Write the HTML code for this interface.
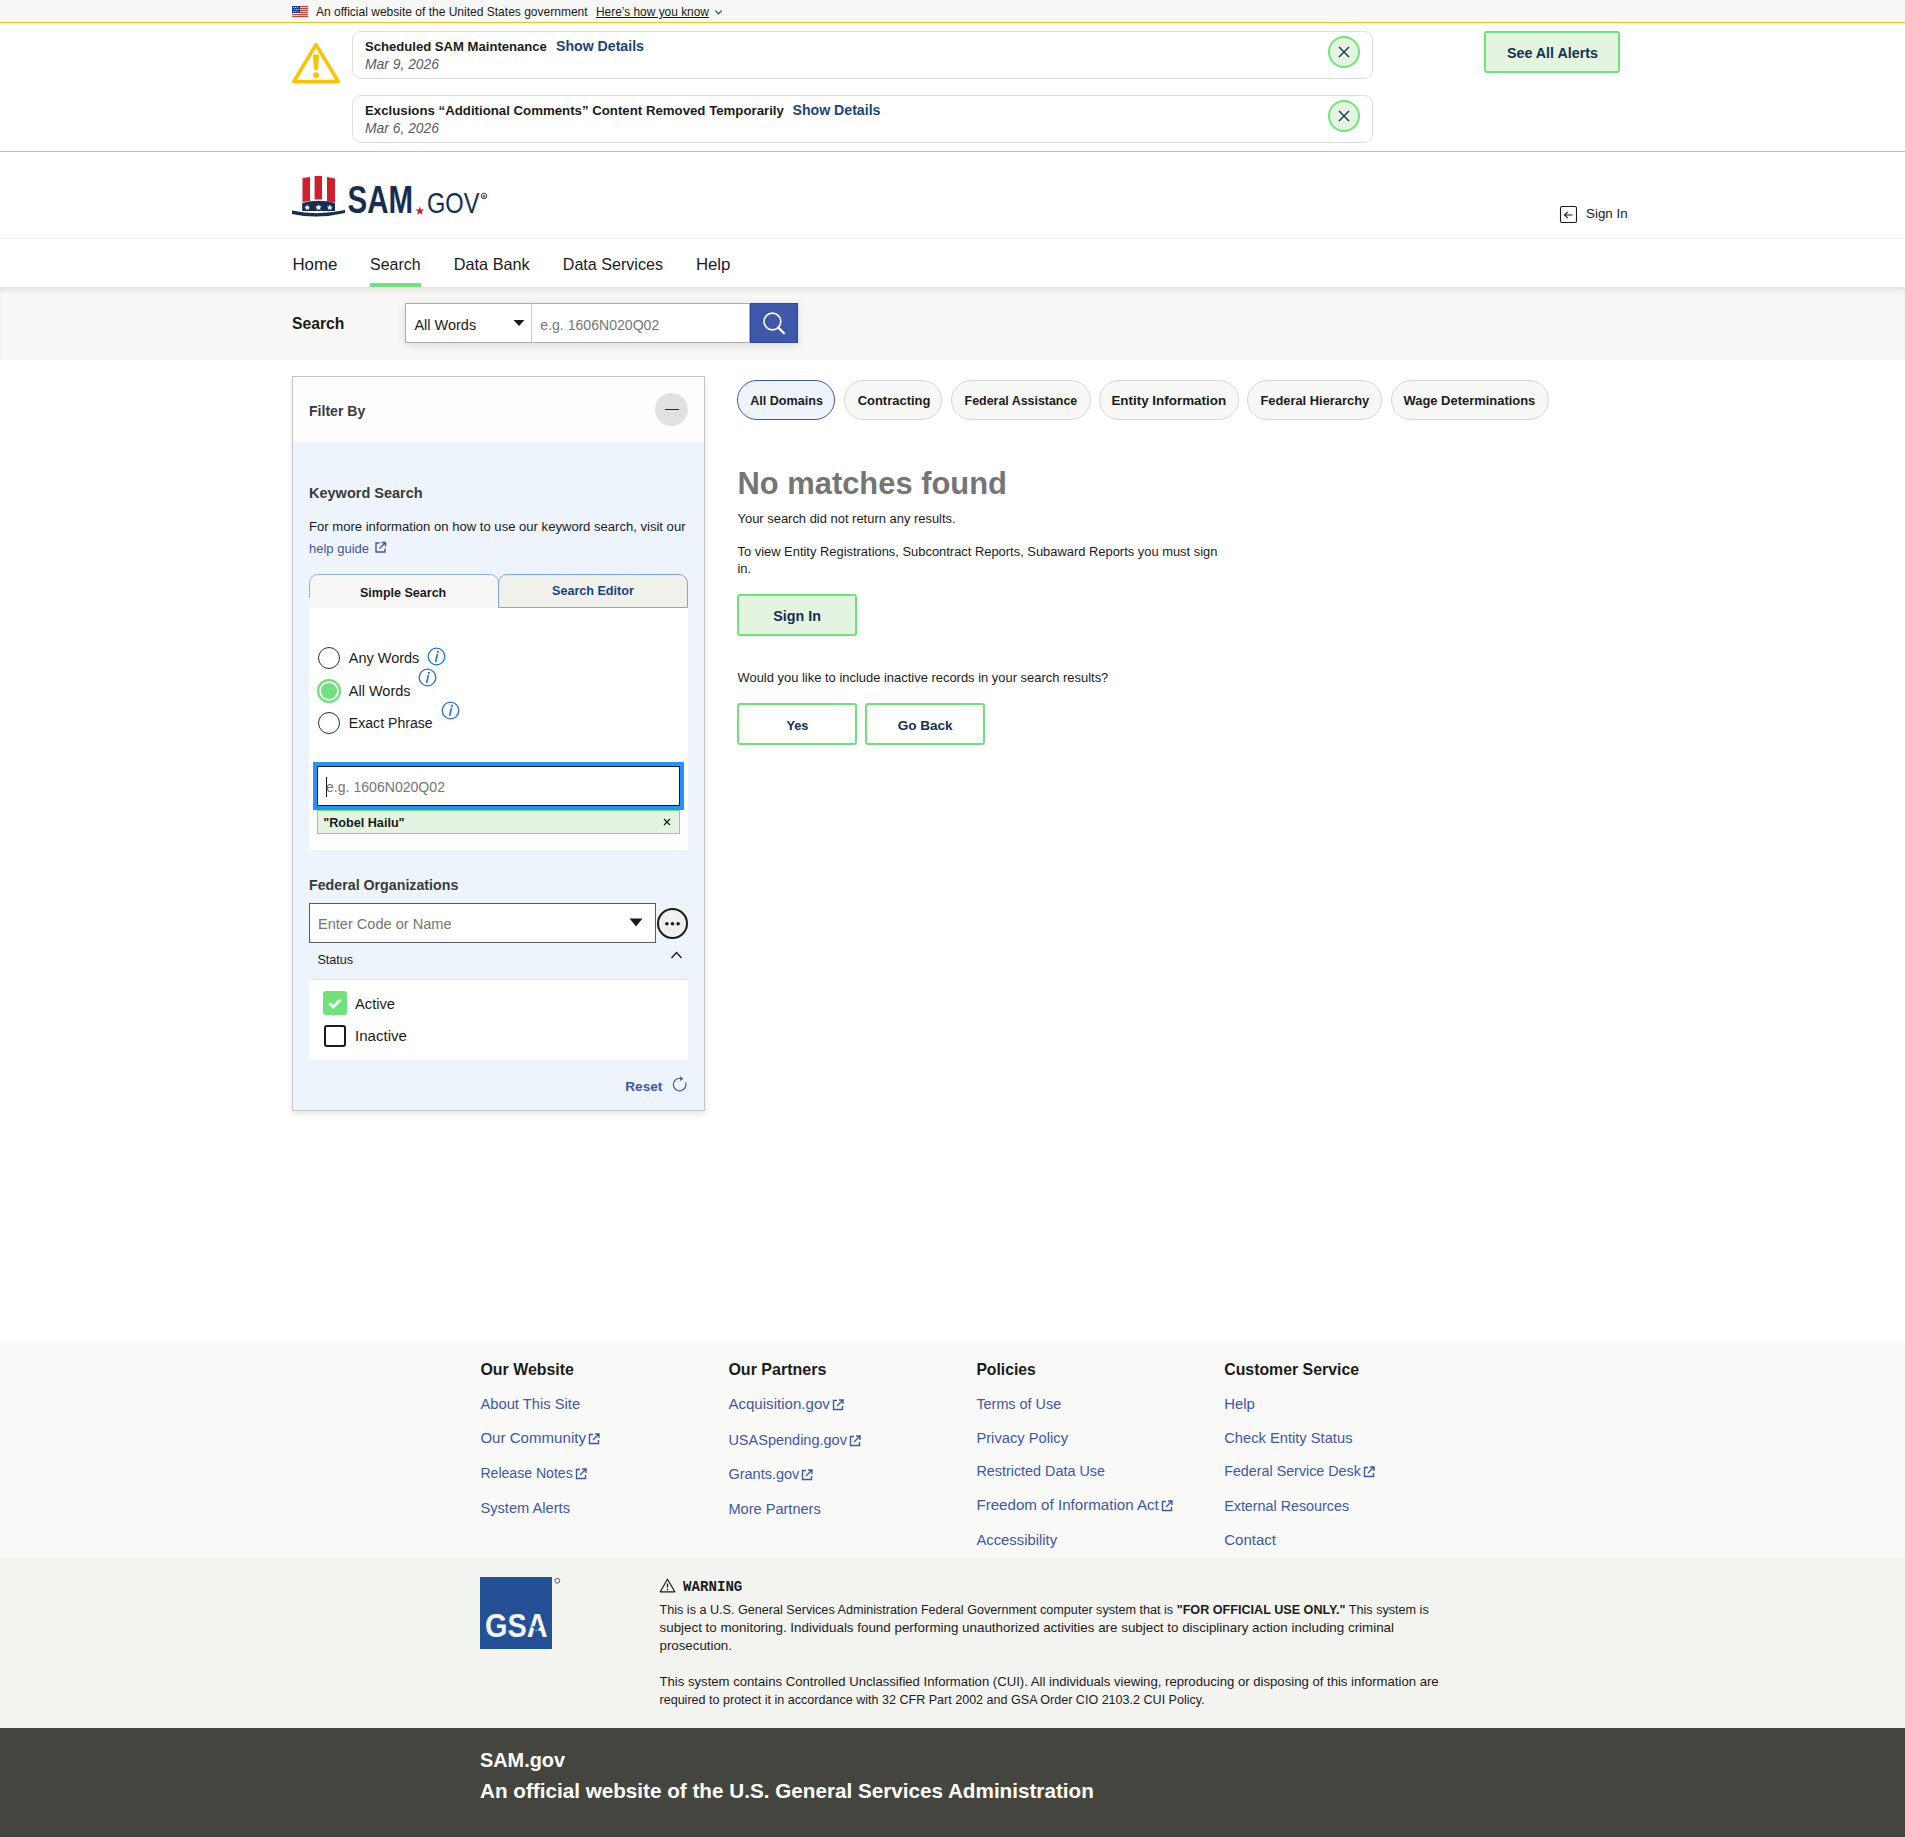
<!DOCTYPE html>
<html><head><meta charset="utf-8"><style>
html,body{margin:0;padding:0;}
body{width:1905px;height:1837px;position:relative;overflow:hidden;background:#fff;font-family:"Liberation Sans",sans-serif;}
.t{position:absolute;white-space:nowrap;line-height:1;}
.r{position:absolute;box-sizing:border-box;}
svg{position:absolute;overflow:visible;}
</style></head><body>
<div class="r" style="left:0px;top:0px;width:1905px;height:22px;background:#f7f7f5"></div>
<div class="r" style="left:0px;top:22px;width:1905px;height:1px;background:#f7c600"></div>
<svg style="left:292px;top:6px" width="16" height="11" viewBox="0 0 16 11">
<rect x="0" y="0" width="16" height="11" fill="#fff"/>
<g fill="#d83933"><rect x="7" y="0" width="9" height="1.2"/><rect x="7" y="2" width="9" height="1.2"/><rect x="7" y="4" width="9" height="1.2"/><rect x="7" y="6" width="9" height="1.2"/><rect x="0" y="8" width="16" height="1.2"/><rect x="0" y="10" width="16" height="1"/></g>
<rect x="0" y="0" width="8" height="7" fill="#0b3bb5"/>
<g fill="#fff"><circle cx="1.5" cy="1.5" r=".6"/><circle cx="3.5" cy="1.5" r=".6"/><circle cx="5.5" cy="1.5" r=".6"/><circle cx="2.5" cy="3.5" r=".6"/><circle cx="4.5" cy="3.5" r=".6"/><circle cx="6.5" cy="3.5" r=".6"/><circle cx="1.5" cy="5.5" r=".6"/><circle cx="3.5" cy="5.5" r=".6"/><circle cx="5.5" cy="5.5" r=".6"/></g>
</svg>
<div class="t" style="left:316.0px;top:6px;font-size:12.03px;font-weight:400;color:#1b1b1b;font-style:normal;font-family:'Liberation Sans';">An official website of the United States government</div>
<div class="t" style="left:596.0px;top:7px;font-size:11.91px;font-weight:400;color:#1b1b1b;font-style:normal;font-family:'Liberation Sans';text-decoration:underline;">Here’s how you know</div>
<svg style="left:714px;top:9px" width="9" height="7" viewBox="0 0 9 7"><path d="M1.3 1.6 L4.5 4.8 L7.7 1.6" fill="none" stroke="#3250b0" stroke-width="1.3"/></svg>
<div class="r" style="left:0px;top:151px;width:1905px;height:1px;background:#f7c600"></div>
<svg style="left:292px;top:42px" width="48" height="42" viewBox="0 0 48 42">
<path d="M24 2.6 L46.2 39.6 L1.8 39.6 Z" fill="none" stroke="#f7c600" stroke-width="3.6" stroke-linejoin="round"/>
<path d="M21.3 13.5 Q24 11.6 26.7 13.5 L25.6 27.8 L22.4 27.8 Z" fill="#f7c600" stroke="#f7c600" stroke-width="0.8" stroke-linejoin="round"/>
<circle cx="24" cy="33.2" r="3" fill="#f7c600"/>
</svg>
<div class="r" style="left:352px;top:31px;width:1021px;height:48px;border:1px solid #dcdee0;border-radius:9px;background:#fff"></div>
<div class="t" style="left:365.0px;top:40px;font-size:13.1px;font-weight:700;color:#1b1b1b;font-style:normal;font-family:'Liberation Sans';">Scheduled SAM Maintenance</div>
<div class="t" style="left:556.0px;top:39px;font-size:14.14px;font-weight:700;color:#1a4480;font-style:normal;font-family:'Liberation Sans';">Show Details</div>
<div class="t" style="left:365.0px;top:58px;font-size:13.87px;font-weight:400;color:#565c65;font-style:italic;font-family:'Liberation Sans';">Mar 9, 2026</div>
<div class="r" style="left:1328px;top:36px;width:32px;height:32px;border:2px solid #70e17b;border-radius:50%;background:#e3f5e1"></div>
<svg style="left:1338px;top:46px" width="12" height="12" viewBox="0 0 12 12"><path d="M1 1 L11 11 M11 1 L1 11" stroke="#1b2b45" stroke-width="1.4"/></svg>
<div class="r" style="left:352px;top:95px;width:1021px;height:48px;border:1px solid #dcdee0;border-radius:9px;background:#fff"></div>
<div class="t" style="left:365.0px;top:104px;font-size:13.24px;font-weight:700;color:#1b1b1b;font-style:normal;font-family:'Liberation Sans';">Exclusions “Additional Comments” Content Removed Temporarily</div>
<div class="t" style="left:792.5px;top:103px;font-size:14.14px;font-weight:700;color:#1a4480;font-style:normal;font-family:'Liberation Sans';">Show Details</div>
<div class="t" style="left:365.0px;top:122px;font-size:13.87px;font-weight:400;color:#565c65;font-style:italic;font-family:'Liberation Sans';">Mar 6, 2026</div>
<div class="r" style="left:1328px;top:100px;width:32px;height:32px;border:2px solid #70e17b;border-radius:50%;background:#e3f5e1"></div>
<svg style="left:1338px;top:110px" width="12" height="12" viewBox="0 0 12 12"><path d="M1 1 L11 11 M11 1 L1 11" stroke="#1b2b45" stroke-width="1.4"/></svg>
<div class="r" style="left:1484px;top:31px;width:136px;height:42px;border:2px solid #70e17b;border-radius:3px;background:#e3f5e1"></div>
<div class="t" style="left:1507.0px;top:46px;font-size:14.28px;font-weight:700;color:#162e51;font-style:normal;font-family:'Liberation Sans';">See All Alerts</div>
<svg style="left:288px;top:170px" width="204" height="52" viewBox="0 0 204 52">
<path d="M14.5 8 L22 7 L22 31 L14.5 32 Z" fill="#d0202e"/>
<path d="M26.6 6 L34 6 L34 29.5 L26.6 29.5 Z" fill="#d0202e"/>
<path d="M39 7 L47 8.5 L47 32.5 L39 31.5 Z" fill="#d0202e"/>
<path d="M14.2 33 Q30.5 28.5 47 33 L47 41 L14.2 41 Z" fill="#162e51"/>
<g fill="#fff">
<path d="M19.3 34.6 l0.9 1.9 2 .2 -1.5 1.3 .5 2 -1.9 -1.1 -1.9 1.1 .5 -2 -1.5 -1.3 2 -.2z"/>
<path d="M30.5 34.2 l1.0 2.1 2.2 .2 -1.7 1.5 .6 2.2 -2.1 -1.2 -2.1 1.2 .6 -2.2 -1.7 -1.5 2.2 -.2z"/>
<path d="M41.8 34.6 l0.9 1.9 2 .2 -1.5 1.3 .5 2 -1.9 -1.1 -1.9 1.1 .5 -2 -1.5 -1.3 2 -.2z"/>
</g>
<path d="M4 40.5 Q30 46 57 40 L57 43 Q30 49.5 4 44 Z" fill="#162e51"/>
<text x="59.5" y="42.8" font-family="Liberation Sans" font-weight="700" font-size="38.5" fill="#162e51" textLength="65.5" lengthAdjust="spacingAndGlyphs">SAM</text>
<path d="M131.80 36.40 L132.94 39.44 L136.17 39.58 L133.64 41.60 L134.50 44.72 L131.80 42.93 L129.10 44.72 L129.96 41.60 L127.43 39.58 L130.66 39.44Z" fill="#d0202e"/>
<text x="139" y="43.4" font-family="Liberation Sans" font-weight="400" font-size="29.5" fill="#162e51" textLength="52.5" lengthAdjust="spacingAndGlyphs">GOV</text>
<circle cx="196" cy="26" r="2.8" fill="none" stroke="#162e51" stroke-width="0.9"/>
<text x="194.6" y="27.6" font-family="Liberation Sans" font-weight="700" font-size="4.2" fill="#162e51">R</text>
</svg>
<svg style="left:1559px;top:205px" width="19" height="19" viewBox="0 0 19 19">
<rect x="1.5" y="1.5" width="16" height="16" rx="1.5" fill="none" stroke="#1b1b1b" stroke-width="1.1"/>
<path d="M13.5 10 L5.5 10 M8.8 6.8 L5.5 10 L8.8 13.2" fill="none" stroke="#1b1b1b" stroke-width="1.1"/>
</svg>
<div class="t" style="left:1586.0px;top:207px;font-size:13.36px;font-weight:400;color:#1b1b1b;font-style:normal;font-family:'Liberation Sans';">Sign In</div>
<div class="r" style="left:0px;top:238px;width:1905px;height:1px;background:#f0f0ea"></div>
<div class="t" style="left:292.4px;top:257px;font-size:16.87px;font-weight:400;color:#1b1b1b;font-style:normal;font-family:'Liberation Sans';">Home</div>
<div class="t" style="left:370.1px;top:257px;font-size:15.94px;font-weight:400;color:#1b1b1b;font-style:normal;font-family:'Liberation Sans';">Search</div>
<div class="t" style="left:453.8px;top:256px;font-size:16.28px;font-weight:400;color:#1b1b1b;font-style:normal;font-family:'Liberation Sans';">Data Bank</div>
<div class="t" style="left:562.8px;top:256px;font-size:16.1px;font-weight:400;color:#1b1b1b;font-style:normal;font-family:'Liberation Sans';">Data Services</div>
<div class="t" style="left:695.9px;top:257px;font-size:16.77px;font-weight:400;color:#1b1b1b;font-style:normal;font-family:'Liberation Sans';">Help</div>
<div class="r" style="left:370px;top:283px;width:51px;height:4px;background:#70e17b"></div>
<div class="r" style="left:0px;top:287px;width:1905px;height:73px;background:#f7f7f5;box-shadow:inset 0 6px 6px -4px rgba(0,0,0,0.12)"></div>
<div class="t" style="left:292.0px;top:316px;font-size:15.71px;font-weight:700;color:#1b1b1b;font-style:normal;font-family:'Liberation Sans';">Search</div>
<div class="r" style="left:405px;top:303px;width:393px;height:40px;box-shadow:0 2px 8px rgba(0,0,0,0.12)"></div>
<div class="r" style="left:405px;top:303px;width:127px;height:40px;background:#fff;border:1px solid #adadad"></div>
<div class="t" style="left:414.4px;top:318px;font-size:14.51px;font-weight:400;color:#1b1b1b;font-style:normal;font-family:'Liberation Sans';">All Words</div>
<svg style="left:513px;top:319px" width="12" height="8" viewBox="0 0 12 8"><path d="M0.5 1 L11.5 1 L6 7 Z" fill="#1b1b1b"/></svg>
<div class="r" style="left:531px;top:303px;width:219px;height:40px;background:#fff;border:1px solid #adadad;border-left:1px solid #c9c9c9"></div>
<div class="t" style="left:540.3px;top:318px;font-size:14.09px;font-weight:400;color:#757575;font-style:normal;font-family:'Liberation Sans';">e.g. 1606N020Q02</div>
<div class="r" style="left:750px;top:303px;width:48px;height:40px;background:#3f57a8;border:1px solid #2f469e"></div>
<svg style="left:750px;top:303px" width="48" height="40" viewBox="0 0 48 40">
<circle cx="22.4" cy="18.5" r="8.4" fill="none" stroke="#fff" stroke-width="1.6"/>
<path d="M28.3 24.6 L34 30.3" stroke="#fff" stroke-width="2.2" stroke-linecap="round"/>
</svg>
<div class="r" style="left:292px;top:376px;width:413px;height:735px;background:#edf4fc;border:1px solid #c4c4c4;box-shadow:0 3px 6px rgba(0,0,0,0.10)"></div>
<div class="r" style="left:293px;top:377px;width:411px;height:65px;background:#fdfdfd"></div>
<div class="t" style="left:309.0px;top:404px;font-size:14.05px;font-weight:700;color:#3a3a38;font-style:normal;font-family:'Liberation Sans';">Filter By</div>
<div class="r" style="left:655px;top:393px;width:33px;height:33px;background:#dfe1e2;border-radius:50%"></div>
<div class="r" style="left:664.5px;top:408.5px;width:14px;height:1.6px;background:#162e51"></div>
<div class="t" style="left:309.0px;top:486px;font-size:14.51px;font-weight:700;color:#3a3a38;font-style:normal;font-family:'Liberation Sans';">Keyword Search</div>
<div class="t" style="left:309.0px;top:520px;font-size:13.09px;font-weight:400;color:#1b1b1b;font-style:normal;font-family:'Liberation Sans';">For more information on how to use our keyword search, visit our</div>
<div class="t" style="left:309.0px;top:542px;font-size:13.0px;font-weight:400;color:#3f57a6;font-style:normal;font-family:'Liberation Sans';">help guide</div>
<svg style="left:374px;top:541px" width="13" height="13" viewBox="0 0 13 13">
<path d="M5.5 2 L2 2 L2 11 L11 11 L11 7.5" fill="none" stroke="#3f57a6" stroke-width="1.4"/>
<path d="M7.5 1.5 L11.5 1.5 L11.5 5.5 M11.5 1.5 L5.5 7.5" fill="none" stroke="#3f57a6" stroke-width="1.4"/>
</svg>
<div class="r" style="left:309px;top:607px;width:379px;height:243px;background:#fff"></div>
<div class="r" style="left:309px;top:574px;width:190px;height:34px;background:#f7f7f5;border:1px solid #8ab4f8;border-bottom:none;border-radius:9px 9px 0 0"></div>
<div class="r" style="left:309px;top:598px;width:190px;height:10px;background:#f7f7f5;border-left:1px solid #fff"></div>
<div class="r" style="left:498px;top:574px;width:190px;height:34px;background:#f1f1ec;border:1px solid #7aa7f0;border-radius:9px 9px 0 0"></div>
<div class="t" style="left:360.0px;top:587px;font-size:12.52px;font-weight:700;color:#1b1b1b;font-style:normal;font-family:'Liberation Sans';">Simple Search</div>
<div class="t" style="left:552.0px;top:585px;font-size:12.58px;font-weight:700;color:#1a4480;font-style:normal;font-family:'Liberation Sans';">Search Editor</div>
<div class="r" style="left:318px;top:646.7px;width:22px;height:22px;border-radius:50%;background:#fff;border:1.4px solid #2e2e2e"></div>
<div class="t" style="left:348.8px;top:651px;font-size:14.47px;font-weight:400;color:#1b1b1b;font-style:normal;font-family:'Liberation Sans';">Any Words</div>
<svg style="left:426.5px;top:646.5px" width="19" height="19" viewBox="0 0 19 19">
<circle cx="9.5" cy="9.5" r="8.3" fill="none" stroke="#1f6fe0" stroke-width="1.3"/>
<path d="M10.3 7.6 L8.7 14.2" stroke="#1f6fe0" stroke-width="1.6" stroke-linecap="round"/>
<circle cx="10.9" cy="4.9" r="1.05" fill="#1f6fe0"/>
</svg>
<div class="r" style="left:317px;top:678.8px;width:24px;height:24px;border-radius:50%;background:#70e17b;box-shadow:inset 0 0 0 2.2px #70e17b, inset 0 0 0 4px #fff"></div>
<div class="t" style="left:348.8px;top:684px;font-size:14.51px;font-weight:400;color:#1b1b1b;font-style:normal;font-family:'Liberation Sans';">All Words</div>
<svg style="left:418.3px;top:667.9px" width="19" height="19" viewBox="0 0 19 19">
<circle cx="9.5" cy="9.5" r="8.3" fill="none" stroke="#1f6fe0" stroke-width="1.3"/>
<path d="M10.3 7.6 L8.7 14.2" stroke="#1f6fe0" stroke-width="1.6" stroke-linecap="round"/>
<circle cx="10.9" cy="4.9" r="1.05" fill="#1f6fe0"/>
</svg>
<div class="r" style="left:318px;top:712px;width:22px;height:22px;border-radius:50%;background:#fff;border:1.4px solid #2e2e2e"></div>
<div class="t" style="left:348.8px;top:716px;font-size:14.12px;font-weight:400;color:#1b1b1b;font-style:normal;font-family:'Liberation Sans';">Exact Phrase</div>
<svg style="left:440.7px;top:700.5px" width="19" height="19" viewBox="0 0 19 19">
<circle cx="9.5" cy="9.5" r="8.3" fill="none" stroke="#1f6fe0" stroke-width="1.3"/>
<path d="M10.3 7.6 L8.7 14.2" stroke="#1f6fe0" stroke-width="1.6" stroke-linecap="round"/>
<circle cx="10.9" cy="4.9" r="1.05" fill="#1f6fe0"/>
</svg>
<div class="r" style="left:313px;top:762px;width:371px;height:48px;border:4px solid #2491ff;background:#fff"></div>
<div class="r" style="left:317px;top:766px;width:363px;height:40px;border:1px solid #1b1b1b"></div>
<div class="t" style="left:326.0px;top:780px;font-size:14.09px;font-weight:400;color:#757575;font-style:normal;font-family:'Liberation Sans';">e.g. 1606N020Q02</div>
<div class="r" style="left:326px;top:777px;width:1px;height:20px;background:#1b1b1b"></div>
<div class="r" style="left:317px;top:810px;width:363px;height:24px;background:#e3f5e1;border:1px solid #70e17b"></div>
<div class="t" style="left:323.2px;top:817px;font-size:12.64px;font-weight:700;color:#1b1b1b;font-style:normal;font-family:'Liberation Sans';">"Robel Hailu"</div>
<svg style="left:662px;top:817px" width="10" height="10" viewBox="0 0 10 10"><path d="M2 2 L8 8 M8 2 L2 8" stroke="#1b1b1b" stroke-width="1.2"/></svg>
<div class="t" style="left:309.0px;top:878px;font-size:14.23px;font-weight:700;color:#3a3a38;font-style:normal;font-family:'Liberation Sans';">Federal Organizations</div>
<div class="r" style="left:309px;top:903px;width:347px;height:40px;background:#fff;border:1px solid #565c65"></div>
<div class="t" style="left:318.0px;top:917px;font-size:14.57px;font-weight:400;color:#757575;font-style:normal;font-family:'Liberation Sans';">Enter Code or Name</div>
<svg style="left:629px;top:918px" width="14" height="10" viewBox="0 0 14 10"><path d="M0.5 0.5 L13.5 0.5 L7 8.5 Z" fill="#1b1b1b"/></svg>
<div class="r" style="left:657px;top:908px;width:31px;height:31px;border:2px solid #1b1b1b;border-radius:50%;background:#f0f0f0"></div>
<svg style="left:657px;top:908px" width="31" height="31" viewBox="0 0 31 31"><circle cx="9.9" cy="15.8" r="1.8" fill="#1b1b1b"/><circle cx="15.5" cy="15.8" r="1.8" fill="#1b1b1b"/><circle cx="21.1" cy="15.8" r="1.8" fill="#1b1b1b"/></svg>
<div class="t" style="left:317.4px;top:954px;font-size:12.63px;font-weight:400;color:#1b1b1b;font-style:normal;font-family:'Liberation Sans';">Status</div>
<svg style="left:670px;top:950px" width="13" height="10" viewBox="0 0 13 10"><path d="M1.5 8 L6.5 2.5 L11.5 8" fill="none" stroke="#1b1b1b" stroke-width="1.3"/></svg>
<div class="r" style="left:309px;top:979px;width:379px;height:81px;background:#fff;border-top:1px solid #e6e6e6"></div>
<div class="r" style="left:323px;top:991px;width:24px;height:24px;background:#70e17b;border-radius:3px"></div>
<svg style="left:323px;top:991px" width="24" height="24" viewBox="0 0 24 24"><path d="M6.5 12.2 L10.3 16 L17.5 8.8" fill="none" stroke="#fff" stroke-width="2.8"/></svg>
<div class="t" style="left:355.0px;top:997px;font-size:14.69px;font-weight:400;color:#1b1b1b;font-style:normal;font-family:'Liberation Sans';">Active</div>
<div class="r" style="left:324px;top:1025px;width:22px;height:22px;border:2px solid #1b1b1b;border-radius:3px;background:#fff"></div>
<div class="t" style="left:355.0px;top:1028px;font-size:15.09px;font-weight:400;color:#1b1b1b;font-style:normal;font-family:'Liberation Sans';">Inactive</div>
<div class="t" style="left:625.3px;top:1080px;font-size:13.58px;font-weight:700;color:#3f57a6;font-style:normal;font-family:'Liberation Sans';">Reset</div>
<svg style="left:671px;top:1076px" width="17" height="17" viewBox="0 0 17 17">
<path d="M9.2 2.3 A6.3 6.3 0 1 0 14.6 6.45" fill="none" stroke="#3f57a6" stroke-width="1.2"/>
<path d="M9.1 0.2 L12.4 2.7 L9.1 5.0 Z" fill="#3f57a6"/>
</svg>
<div class="r" style="left:737px;top:380px;width:98px;height:40px;border:1px solid #3f57a6;border-radius:20px;background:#eef4fb"></div>
<div class="t" style="left:750.2px;top:395px;font-size:12.6px;font-weight:700;color:#1b1b1b;font-style:normal;font-family:'Liberation Sans';">All Domains</div>
<div class="r" style="left:844px;top:380px;width:98px;height:40px;border:1px solid #d6d7d9;border-radius:20px;background:#f7f7f5"></div>
<div class="t" style="left:857.7px;top:395px;font-size:12.96px;font-weight:700;color:#1b1b1b;font-style:normal;font-family:'Liberation Sans';">Contracting</div>
<div class="r" style="left:951px;top:380px;width:140px;height:40px;border:1px solid #d6d7d9;border-radius:20px;background:#f7f7f5"></div>
<div class="t" style="left:964.6px;top:395px;font-size:12.41px;font-weight:700;color:#1b1b1b;font-style:normal;font-family:'Liberation Sans';">Federal Assistance</div>
<div class="r" style="left:1099px;top:380px;width:140px;height:40px;border:1px solid #d6d7d9;border-radius:20px;background:#f7f7f5"></div>
<div class="t" style="left:1111.4px;top:394px;font-size:13.41px;font-weight:700;color:#1b1b1b;font-style:normal;font-family:'Liberation Sans';">Entity Information</div>
<div class="r" style="left:1247px;top:380px;width:135px;height:40px;border:1px solid #d6d7d9;border-radius:20px;background:#f7f7f5"></div>
<div class="t" style="left:1260.4px;top:395px;font-size:12.88px;font-weight:700;color:#1b1b1b;font-style:normal;font-family:'Liberation Sans';">Federal Hierarchy</div>
<div class="r" style="left:1391px;top:380px;width:158px;height:40px;border:1px solid #d6d7d9;border-radius:20px;background:#f7f7f5"></div>
<div class="t" style="left:1403.5px;top:395px;font-size:12.95px;font-weight:700;color:#1b1b1b;font-style:normal;font-family:'Liberation Sans';">Wage Determinations</div>
<div class="t" style="left:737.5px;top:469px;font-size:30.9px;font-weight:700;color:#757575;font-style:normal;font-family:'Liberation Sans';">No matches found</div>
<div class="t" style="left:737.5px;top:513px;font-size:12.94px;font-weight:400;color:#1b1b1b;font-style:normal;font-family:'Liberation Sans';">Your search did not return any results.</div>
<div class="t" style="left:737.5px;top:546px;font-size:12.91px;font-weight:400;color:#1b1b1b;font-style:normal;font-family:'Liberation Sans';">To view Entity Registrations, Subcontract Reports, Subaward Reports you must sign</div>
<div class="t" style="left:737.5px;top:563px;font-size:12.91px;font-weight:400;color:#1b1b1b;font-style:normal;font-family:'Liberation Sans';">in.</div>
<div class="r" style="left:737px;top:594px;width:120px;height:42px;background:#e3f5e1;border:2px solid #70e17b;border-radius:3px"></div>
<div class="t" style="left:773.3px;top:609px;font-size:14.34px;font-weight:700;color:#162e51;font-style:normal;font-family:'Liberation Sans';">Sign In</div>
<div class="t" style="left:737.5px;top:672px;font-size:12.94px;font-weight:400;color:#1b1b1b;font-style:normal;font-family:'Liberation Sans';">Would you like to include inactive records in your search results?</div>
<div class="r" style="left:737px;top:703px;width:120px;height:42px;background:#fff;border:2px solid #70e17b;border-radius:3px"></div>
<div class="t" style="left:786.4px;top:720px;font-size:12.76px;font-weight:700;color:#162e51;font-style:normal;font-family:'Liberation Sans';">Yes</div>
<div class="r" style="left:865px;top:703px;width:120px;height:42px;background:#fff;border:2px solid #70e17b;border-radius:3px"></div>
<div class="t" style="left:897.7px;top:719px;font-size:13.56px;font-weight:700;color:#162e51;font-style:normal;font-family:'Liberation Sans';">Go Back</div>
<div class="r" style="left:0px;top:1343px;width:1905px;height:214px;background:#f9f9f7"></div>
<div class="t" style="left:480.4px;top:1362px;font-size:15.94px;font-weight:700;color:#1b1b1b;font-style:normal;font-family:'Liberation Sans';">Our Website</div>
<div class="t" style="left:480.4px;top:1397px;font-size:14.76px;font-weight:400;color:#3f57a6;font-style:normal;font-family:'Liberation Sans';">About This Site</div>
<div class="t" style="left:480.4px;top:1430px;font-size:15.08px;font-weight:400;color:#3f57a6;font-style:normal;font-family:'Liberation Sans';">Our Community</div>
<svg style="left:588.0px;top:1433.4px" width="12" height="12" viewBox="0 0 12 12">
<path d="M5 1.5 L1.5 1.5 L1.5 10.5 L10.5 10.5 L10.5 7" fill="none" stroke="#3f57a6" stroke-width="1.4"/>
<path d="M7 1 L11 1 L11 5 M11 1 L5 7" fill="none" stroke="#3f57a6" stroke-width="1.4"/>
</svg>
<div class="t" style="left:480.4px;top:1466px;font-size:14.09px;font-weight:400;color:#3f57a6;font-style:normal;font-family:'Liberation Sans';">Release Notes</div>
<svg style="left:574.8px;top:1468.0px" width="12" height="12" viewBox="0 0 12 12">
<path d="M5 1.5 L1.5 1.5 L1.5 10.5 L10.5 10.5 L10.5 7" fill="none" stroke="#3f57a6" stroke-width="1.4"/>
<path d="M7 1 L11 1 L11 5 M11 1 L5 7" fill="none" stroke="#3f57a6" stroke-width="1.4"/>
</svg>
<div class="t" style="left:480.4px;top:1501px;font-size:14.66px;font-weight:400;color:#3f57a6;font-style:normal;font-family:'Liberation Sans';">System Alerts</div>
<div class="t" style="left:728.4px;top:1361px;font-size:16.05px;font-weight:700;color:#1b1b1b;font-style:normal;font-family:'Liberation Sans';">Our Partners</div>
<div class="t" style="left:728.4px;top:1396px;font-size:15.09px;font-weight:400;color:#3f57a6;font-style:normal;font-family:'Liberation Sans';">Acquisition.gov</div>
<svg style="left:831.9px;top:1399.4px" width="12" height="12" viewBox="0 0 12 12">
<path d="M5 1.5 L1.5 1.5 L1.5 10.5 L10.5 10.5 L10.5 7" fill="none" stroke="#3f57a6" stroke-width="1.4"/>
<path d="M7 1 L11 1 L11 5 M11 1 L5 7" fill="none" stroke="#3f57a6" stroke-width="1.4"/>
</svg>
<div class="t" style="left:728.4px;top:1433px;font-size:14.5px;font-weight:400;color:#3f57a6;font-style:normal;font-family:'Liberation Sans';">USASpending.gov</div>
<svg style="left:848.9px;top:1434.8px" width="12" height="12" viewBox="0 0 12 12">
<path d="M5 1.5 L1.5 1.5 L1.5 10.5 L10.5 10.5 L10.5 7" fill="none" stroke="#3f57a6" stroke-width="1.4"/>
<path d="M7 1 L11 1 L11 5 M11 1 L5 7" fill="none" stroke="#3f57a6" stroke-width="1.4"/>
</svg>
<div class="t" style="left:728.4px;top:1467px;font-size:14.5px;font-weight:400;color:#3f57a6;font-style:normal;font-family:'Liberation Sans';">Grants.gov</div>
<svg style="left:801.3px;top:1469.4px" width="12" height="12" viewBox="0 0 12 12">
<path d="M5 1.5 L1.5 1.5 L1.5 10.5 L10.5 10.5 L10.5 7" fill="none" stroke="#3f57a6" stroke-width="1.4"/>
<path d="M7 1 L11 1 L11 5 M11 1 L5 7" fill="none" stroke="#3f57a6" stroke-width="1.4"/>
</svg>
<div class="t" style="left:728.4px;top:1502px;font-size:14.58px;font-weight:400;color:#3f57a6;font-style:normal;font-family:'Liberation Sans';">More Partners</div>
<div class="t" style="left:976.4px;top:1362px;font-size:15.69px;font-weight:700;color:#1b1b1b;font-style:normal;font-family:'Liberation Sans';">Policies</div>
<div class="t" style="left:976.4px;top:1397px;font-size:14.4px;font-weight:400;color:#3f57a6;font-style:normal;font-family:'Liberation Sans';">Terms of Use</div>
<div class="t" style="left:976.4px;top:1431px;font-size:14.72px;font-weight:400;color:#3f57a6;font-style:normal;font-family:'Liberation Sans';">Privacy Policy</div>
<div class="t" style="left:976.4px;top:1464px;font-size:14.38px;font-weight:400;color:#3f57a6;font-style:normal;font-family:'Liberation Sans';">Restricted Data Use</div>
<div class="t" style="left:976.4px;top:1497px;font-size:15.14px;font-weight:400;color:#3f57a6;font-style:normal;font-family:'Liberation Sans';">Freedom of Information Act</div>
<svg style="left:1161.0px;top:1500.0px" width="12" height="12" viewBox="0 0 12 12">
<path d="M5 1.5 L1.5 1.5 L1.5 10.5 L10.5 10.5 L10.5 7" fill="none" stroke="#3f57a6" stroke-width="1.4"/>
<path d="M7 1 L11 1 L11 5 M11 1 L5 7" fill="none" stroke="#3f57a6" stroke-width="1.4"/>
</svg>
<div class="t" style="left:976.4px;top:1533px;font-size:14.84px;font-weight:400;color:#3f57a6;font-style:normal;font-family:'Liberation Sans';">Accessibility</div>
<div class="t" style="left:1224.2px;top:1362px;font-size:15.86px;font-weight:700;color:#1b1b1b;font-style:normal;font-family:'Liberation Sans';">Customer Service</div>
<div class="t" style="left:1224.2px;top:1397px;font-size:14.9px;font-weight:400;color:#3f57a6;font-style:normal;font-family:'Liberation Sans';">Help</div>
<div class="t" style="left:1224.2px;top:1431px;font-size:14.71px;font-weight:400;color:#3f57a6;font-style:normal;font-family:'Liberation Sans';">Check Entity Status</div>
<div class="t" style="left:1224.2px;top:1464px;font-size:14.31px;font-weight:400;color:#3f57a6;font-style:normal;font-family:'Liberation Sans';">Federal Service Desk</div>
<svg style="left:1363.0px;top:1466.0px" width="12" height="12" viewBox="0 0 12 12">
<path d="M5 1.5 L1.5 1.5 L1.5 10.5 L10.5 10.5 L10.5 7" fill="none" stroke="#3f57a6" stroke-width="1.4"/>
<path d="M7 1 L11 1 L11 5 M11 1 L5 7" fill="none" stroke="#3f57a6" stroke-width="1.4"/>
</svg>
<div class="t" style="left:1224.2px;top:1499px;font-size:14.32px;font-weight:400;color:#3f57a6;font-style:normal;font-family:'Liberation Sans';">External Resources</div>
<div class="t" style="left:1224.2px;top:1532px;font-size:15.03px;font-weight:400;color:#3f57a6;font-style:normal;font-family:'Liberation Sans';">Contact</div>
<div class="r" style="left:0px;top:1557px;width:1905px;height:171px;background:#f3f3ef"></div>
<svg style="left:480px;top:1577px" width="80" height="72" viewBox="0 0 80 72">
<rect x="0" y="0" width="72" height="72" fill="#245196"/>
<text x="5" y="60" font-family="Liberation Sans" font-weight="700" font-size="33" fill="#f5f5f0" textLength="62.5" lengthAdjust="spacingAndGlyphs">GSA</text>
<path d="M56.20 45.80 L57.42 49.32 L61.15 49.39 L58.18 51.64 L59.26 55.21 L56.20 53.08 L53.14 55.21 L54.22 51.64 L51.25 49.39 L54.98 49.32Z" fill="#245196"/>
<circle cx="77.3" cy="3.8" r="2.4" fill="none" stroke="#245196" stroke-width="0.9"/>
</svg>
<svg style="left:659px;top:1578px" width="17" height="15" viewBox="0 0 17 15">
<path d="M8.5 1.2 L15.8 13.8 L1.2 13.8 Z" fill="none" stroke="#1b1b1b" stroke-width="1.2" stroke-linejoin="round"/>
<path d="M8.5 5.5 L8.5 9.5" stroke="#1b1b1b" stroke-width="1.3"/><circle cx="8.5" cy="11.6" r=".8" fill="#1b1b1b"/>
</svg>
<div class="t" style="left:683.0px;top:1580px;font-size:14.14px;font-weight:700;color:#1b1b1b;font-style:normal;font-family:'Liberation Mono';">WARNING</div>
<div class="t" style="left:659.5px;top:1604px;font-size:12.62px;font-weight:400;color:#1b1b1b;font-style:normal;font-family:'Liberation Sans';">This is a U.S. General Services Administration Federal Government computer system that is <b>"FOR OFFICIAL USE ONLY."</b> This system is</div>
<div class="t" style="left:659.5px;top:1621px;font-size:13.38px;font-weight:400;color:#1b1b1b;font-style:normal;font-family:'Liberation Sans';">subject to monitoring. Individuals found performing unauthorized activities are subject to disciplinary action including criminal</div>
<div class="t" style="left:659.5px;top:1639px;font-size:13.31px;font-weight:400;color:#1b1b1b;font-style:normal;font-family:'Liberation Sans';">prosecution.</div>
<div class="t" style="left:659.5px;top:1675px;font-size:13.13px;font-weight:400;color:#1b1b1b;font-style:normal;font-family:'Liberation Sans';">This system contains Controlled Unclassified Information (CUI). All individuals viewing, reproducing or disposing of this information are</div>
<div class="t" style="left:659.5px;top:1694px;font-size:12.56px;font-weight:400;color:#1b1b1b;font-style:normal;font-family:'Liberation Sans';">required to protect it in accordance with 32 CFR Part 2002 and GSA Order CIO 2103.2 CUI Policy.</div>
<div class="r" style="left:0px;top:1728px;width:1905px;height:109px;background:#454540"></div>
<div class="t" style="left:480.0px;top:1751px;font-size:19.87px;font-weight:700;color:#fff;font-style:normal;font-family:'Liberation Sans';">SAM.gov</div>
<div class="t" style="left:480.0px;top:1781px;font-size:20.68px;font-weight:700;color:#fff;font-style:normal;font-family:'Liberation Sans';">An official website of the U.S. General Services Administration</div>
</body></html>
